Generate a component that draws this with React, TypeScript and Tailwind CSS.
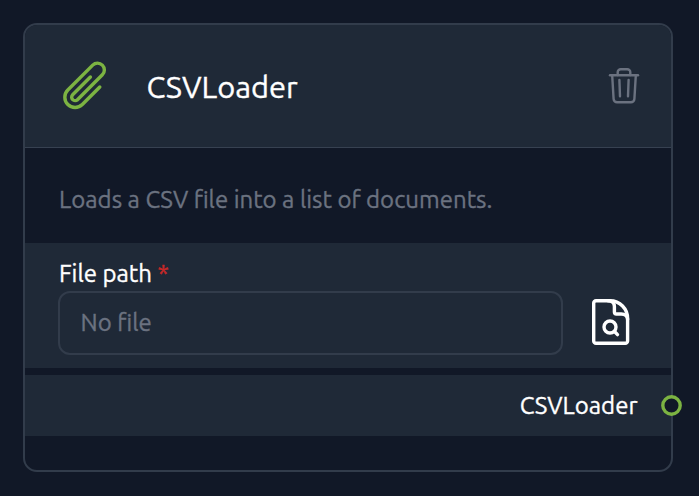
import React from "react";

function PaperClip() {
  return (
    <svg viewBox="0 0 24 24" className="mb-[2px] h-[54.6px] w-[54.6px] text-[#7cb342]" fill="none" stroke="currentColor" strokeWidth="1.5" strokeLinecap="round" strokeLinejoin="round">
      <path d="m18.375 12.739-7.693 7.693a4.5 4.5 0 0 1-6.364-6.364l10.94-10.94A3 3 0 1 1 19.5 7.372L8.552 18.32m.009-.01-.01.01m5.699-9.941-7.81 7.81a1.5 1.5 0 0 0 2.112 2.13" />
    </svg>
  );
}

function Trash() {
  return (
    <svg viewBox="0 0 40 46" className="mb-[2px] h-[46px] w-10 text-[#6b7280]" fill="none" stroke="currentColor" strokeWidth="2.4" strokeLinecap="round" strokeLinejoin="round">
      <path d="M6 13.200h28" />
      <path d="M13.700 13V10.300a3 3 0 0 1 3-3h6.600a3 3 0 0 1 3 3V13" />
      <path d="m8.200 13.500 1.400 23.400a3.500 3.500 0 0 0 3.500 3.400h13.800a3.500 3.500 0 0 0 3.500-3.400L31.800 13.500" />
      <path d="m15.400 18 .6 16.400M24.600 18l-.6 16.400" />
    </svg>
  );
}

function FileSearch() {
  return (
    <svg viewBox="0 0 50 56" className="h-14 w-[50px] text-white" fill="none" stroke="currentColor" strokeWidth="3.400" strokeLinecap="round" strokeLinejoin="round">
      <path d="M24 6.700H10a2.300 2.300 0 0 0-2.300 2.300v38a2.300 2.300 0 0 0 2.300 2.300h29.300a2.300 2.300 0 0 0 2.300-2.300V24.500C41.600 15 34 6.700 24 6.700Z" />
      <path d="M22 6.700c4 0 6.400 2.500 6.400 5.800v5.500a2 2 0 0 0 2 2h4.900c3.500 0 6.300 2 6.300 5.500" />
      <circle cx="24" cy="33" r="6" />
      <path d="m28.500 37.500 3 3.100" />
    </svg>
  );
}

export default function App() {
  return (
    <main className="h-[496px] w-[699px] bg-[#111827] pl-[23px] pt-[23px] font-['Ubuntu','Noto_Sans',sans-serif] text-white [-webkit-text-stroke:0.35px]">
      <section className="flex h-[449px] w-[650px] flex-col rounded-[14px] border-2 border-[#323c4b]">
        <header className="flex h-[123px] shrink-0 items-center rounded-t-[12px] border-b border-[#374151] bg-[#1f2937] pl-[33px] pr-[27px]">
          <PaperClip />
          <h1 className="ml-[34px] grow pt-[2px] text-[30.8px] leading-9">CSVLoader</h1>
          <Trash />
        </header>
        <p className="flex h-[95px] shrink-0 items-center pl-[34px] pt-[8px] text-2xl text-[#6b7280]">
          Loads a CSV file into a list of documents.
        </p>
        <div className="h-[125px] shrink-0 bg-[#1f2937] pl-[33px] pt-[14px]">
          <label className="block h-[33px] pl-px text-2xl leading-[33px]">
            File path <span className="text-[#c62828]">*</span>
          </label>
          <div className="flex items-center">
            <div className="mt-px flex h-[64px] w-[505px] items-center rounded-xl border-2 border-[#323c4b] pl-[20.500px] text-2xl text-[#6b7280]">
              No file
            </div>
            <button className="mb-px ml-[23px]"><FileSearch /></button>
          </div>
        </div>
        <div className="mt-[7px] flex h-[61px] shrink-0 items-center justify-end bg-[#1f2937] text-2xl">
          <span>CSVLoader</span>
          <svg viewBox="0 0 21 21" className="-mr-[11px] ml-[23.500px] h-[21px] w-[21px] text-[#7cb342]">
            <circle cx="10.500" cy="10.500" r="8.700" fill="#111827" stroke="currentColor" strokeWidth="3.400" />
          </svg>
        </div>
      </section>
    </main>
  );
}
